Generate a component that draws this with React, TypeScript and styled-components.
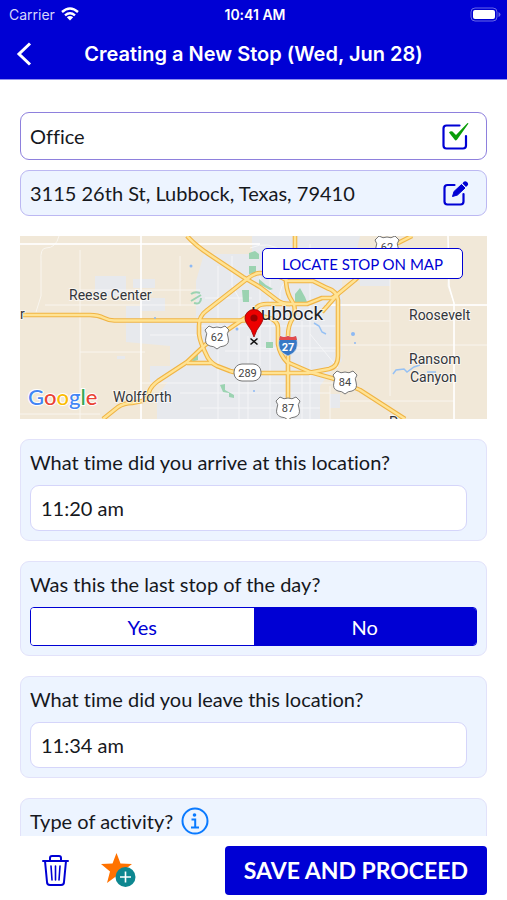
import React, { useState } from "react";
import styled, { createGlobalStyle } from "styled-components";

const blue = "#0000d4";

const GlobalStyle = createGlobalStyle`
  * { box-sizing: border-box; }
  body { margin: 0; background: #fff; }
  body, button, input { font-family: Lato, "Open Sans", sans-serif; font-variant-ligatures: none; }
`;

const Page = styled.div`
  display: flex;
  flex-direction: column;
  height: 100vh;
  color: #16181d;
`;

const Header = styled.header`
  flex: none;
  background: ${blue};
  border-bottom: 1px solid #8f8fee;
  color: #fff;
  font-family: Inter, sans-serif;
`;

const StatusBar = styled.div`
  display: grid;
  grid-template-columns: 1fr auto 1fr;
  align-items: center;
  height: 28px;
  padding: 0 6px 0 9px;
  font-size: 14px;
`;

const Carrier = styled.span`
  display: flex;
  align-items: center;
  gap: 6px;
  color: #d6d6fa;
`;

const Clock = styled.span`
  font-weight: 600;
`;

const Battery = styled.svg`
  justify-self: end;
`;

const TitleBar = styled.div`
  display: grid;
  grid-template-columns: 48px 1fr 48px;
  align-items: center;
  height: 51px;
`;

const Title = styled.h1`
  margin: 0;
  text-align: center;
  font-size: 20px;
  line-height: 28px;
  font-weight: 600;
  white-space: nowrap;
`;

const IconButton = styled.button`
  display: flex;
  align-items: center;
  justify-content: center;
  flex: none;
  padding: 0;
  border: 0;
  background: none;
  color: inherit;
  cursor: pointer;
`;

const Content = styled.main`
  flex: 1;
  min-height: 0;
  overflow-y: auto;
  scrollbar-width: none;
  display: flex;
  flex-direction: column;
  gap: 20px;
  padding: 32px 20px 0;
`;

const PlaceFields = styled.div`
  display: flex;
  flex-direction: column;
  gap: 10px;
`;

const PlaceField = styled.div<{ $tinted?: boolean }>`
  display: flex;
  align-items: center;
  height: ${(p) => (p.$tinted ? 46 : 48)}px;
  padding: 0 17px 0 9px;
  border: 1px solid ${(p) => (p.$tinted ? "#bcb8f2" : "#8e80dd")};
  border-radius: 9px;
  background: ${(p) => (p.$tinted ? "#edf4ff" : "#fff")};
`;

const PlaceInput = styled.input`
  flex: 1;
  min-width: 0;
  padding: 0;
  border: 0;
  background: none;
  color: inherit;
  font-size: 20px;
  line-height: 26px;
  outline: none;
`;

const MapPanel = styled.section`
  position: relative;
  flex: none;
`;

const MapDrawing = styled.svg`
  display: block;
  width: 100%;
  height: auto;
`;

const LocateButton = styled.button`
  position: absolute;
  top: 12px;
  right: 24px;
  height: 31px;
  padding: 0 19px;
  border: 1px solid ${blue};
  border-radius: 5px;
  background: #fff;
  color: ${blue};
  font-size: 15px;
  line-height: 20px;
  cursor: pointer;
`;

const Card = styled.section`
  flex: none;
  display: flex;
  flex-direction: column;
  gap: 10px;
  padding: 9px;
  border: 1px solid #e2e2fa;
  border-radius: 9px;
  background: #edf4ff;
`;

const Question = styled.label`
  font-size: 20px;
  line-height: 26px;
`;

const TimeInput = styled.input`
  height: 46px;
  margin-right: 10px;
  padding: 0 10px;
  border: 1px solid #d5d5fa;
  border-radius: 9px;
  background: #fff;
  color: inherit;
  font-size: 20px;
`;

const ChoiceGroup = styled.div`
  display: flex;
  height: 39px;
  border: 1px solid ${blue};
  border-radius: 4px;
  overflow: hidden;
`;

const Choice = styled.label<{ $selected: boolean }>`
  flex: 1;
  display: flex;
  align-items: center;
  justify-content: center;
  background: ${(p) => (p.$selected ? blue : "#fff")};
  color: ${(p) => (p.$selected ? "#fff" : blue)};
  font-size: 20px;
  cursor: pointer;
`;

const ChoiceRadio = styled.input`
  appearance: none;
  width: 0;
  height: 0;
  margin: 0;
`;

const ActivityRow = styled.div`
  display: flex;
  align-items: center;
  gap: 8px;
  height: 26px;
  margin-bottom: 56px;
`;

const Footer = styled.footer`
  flex: none;
  display: flex;
  align-items: center;
  height: 64px;
  padding: 4px 20px 0 40px;
  gap: 30px;
  background: #fff;
`;

const SaveButton = styled.button`
  height: 49px;
  margin-left: auto;
  padding: 0 19px;
  border: 0;
  border-radius: 4px;
  background: ${blue};
  color: #fff;
  font-size: 23px;
  font-weight: 700;
  white-space: nowrap;
  cursor: pointer;
`;

const roads = [
  "M3 79H70Q78 79 84 82T96 84.500H232",
  "M167 0Q176 10 190 19L223 41L240 51L257 64Q262 68 270 68",
  "M240 37Q234 37 227 43L186 75Q179 80 179 90V98Q180 106 186 118Q189 126 197 130L210 135Q216 137 230 137H288L309 133Q318 131 318 120V64Q317 55 307 52L293 45H268Q254 37 240 37",
  "M83 183L98 171Q104 167 112 167L122 165Q128 163 129 156Q131 150 138 145L167 126L185 109L197 101L228 80L237 71Q240 68 247 68H287L302 62H312L318 58L335 44L366 14Q373 8 380 6L392 0",
  "M167 127H192",
  "M275 0V32Q266 36 266 46Q267 58 272 65Q277 72 273 82Q268 89 268 100V183",
  "M240 80Q258 82 258 92V108Q260 119 267 126L290 136L315 143L340 154L385 183",
  "M302 76L318 58",
];

const minorRoads = [
  "M0 8H240", "M121 0V183", "M60 14V183", "M39 0Q36 12 26 12Q20 12 21 25V60L16 76",
  "M60 54H180", "M60 116H125", "M25 69H180", "M0 178H80", "M130 99H180",
  "M198 30V183", "M212 20V50L219 62V183", "M160 20V70", "M228 100V183",
  "M120 147H320", "M205 115H315", "M160 157H310", "M180 172H300", "M240 90H315",
  "M290 8V183", "M310 150V183", "M240 40V130", "M250 40V183", "M282 85V183",
  "M305 69H467", "M428 0L429 20L428 50L434 67V183", "M330 85H370", "M318 109H467",
  "M370 35V160", "M320 165H434", "M230 12Q250 4 262 16", "M290 98L318 132",
  "M260 64Q258 48 272 40", "M230 112H318", "M185 62H232", "M180 90H258",
];

function UsShield({ x, y, label }: { x: number; y: number; label: string }) {
  return (
    <g transform={`translate(${x} ${y})`}>
      <path
        d="M-8 -11Q-4 -8 0 -10Q4 -8 8 -11L12 -7Q9 -3 11 0Q13 7 7 9Q3 9 0 12Q-3 9 -7 9Q-13 7 -11 0Q-9 -3 -12 -7Z"
        fill="#fff" stroke="#777" strokeWidth="1" strokeLinejoin="round"
      />
      <text y="4" textAnchor="middle" fontSize="11" fill="#444">{label}</text>
    </g>
  );
}

function StopMap() {
  return (
    <MapDrawing viewBox="0 0 467 183" role="img" aria-label="Map of Lubbock" fontFamily="Roboto, sans-serif">
      <rect width="467" height="183" fill="#f1e8d8" />
      <path
        d="M184 18H232V0H340L335 22L322 42V125L308 139L300 150V183H137V160L150 143V110L106 106V70H120V84H176V45Z"
        fill="#e7e9ed"
      />
      <path d="M75 40H106V60H75ZM113 43H135V52H113ZM120 62H145V75H120ZM130 130H152V146H130ZM97 120H105V123H97ZM340 34H370V50H340ZM310 158H320V172H310Z" fill="#e7e9ed" />
      <g fill="none" stroke="#fff" strokeWidth="1" opacity="0.6">
        {minorRoads.map((d) => <path key={d} d={d} />)}
      </g>
      <path d="M0 8H240M121 0V183M305 69H467M428 0L429 50L434 67V183" fill="none" stroke="#fff" strokeWidth="1.5" />
      <g fill="#9bd3b1">
        <path d="M229 17L235 15L239 18V23H229ZM229 30H236V37L229 38ZM222 54H229V66H223ZM275 58L280 52L285 61L287 66L275 68ZM171 126L178 117V124ZM246 106H253V112H246ZM200 149L205 148V154L214 159V162L209 161V157L203 156ZM239 43L246 49L253 53L250 54L239 48Z" />
        <path d="M171 58Q175 55 180 57M171 65Q176 62 181 59M174 67Q181 69 181 62" fill="none" stroke="#9bd3b1" strokeWidth="2" />
      </g>
      <g fill="none" stroke="#f0b445" strokeWidth="4.600" strokeLinejoin="round">
        {roads.map((d) => <path key={d} d={d} />)}
      </g>
      <g fill="none" stroke="#ffe394" strokeWidth="2.400" strokeLinejoin="round">
        {roads.map((d) => <path key={d} d={d} />)}
      </g>
      <path d="M373 138L376 134L384 133L387 136L394 131L400 129M294 87L299 90L302 96L306 98M407 136H416" fill="none" stroke="#96c1f4" strokeWidth="1.500" />
      <g fill="#8db9f4">
        <circle cx="333" cy="98" r="2" /><circle cx="171" cy="30" r="1.500" />
        <circle cx="217" cy="93" r="1.500" /><circle cx="135" cy="82" r="1" />
        <circle cx="335" cy="107" r="1" /><circle cx="234" cy="155" r="1" />
      </g>

      <UsShield x={197} y={101} label="62" />
      <UsShield x={367} y={11} label="62" />
      <UsShield x={325} y={146} label="84" />
      <UsShield x={268} y={172} label="87" />
      <rect x="214" y="128" width="27" height="17" rx="8" fill="#fff" stroke="#777" strokeWidth="1" />
      <text x="227.500" y="141" textAnchor="middle" fontSize="11" fill="#444">289</text>
      <path d="M260 100Q264 102 268 100Q272 102 276 100Q281 115 268 120Q255 115 260 100Z" fill="#3678c5" stroke="#fff" strokeWidth="0.500" />
      <path d="M260 100Q264 102 268 100Q272 102 276 100L277 104H259Z" fill="#e34b4c" />
      <text x="268" y="115" textAnchor="middle" fontSize="11" fontWeight="700" fill="#fff">27</text>

      <g fill="#33363b" stroke="#fff" strokeWidth="2" strokeOpacity="0.6" paintOrder="stroke" fontSize="14">
        <text x="49" y="64">Reese Center</text>
        <text x="0" y="83">r</text>
        <text x="93" y="166">Wolfforth</text>
        <text x="389" y="84">Roosevelt</text>
        <text x="389" y="128">Ransom</text>
        <text x="390" y="146">Canyon</text>
        <text x="369" y="191">P</text>
        <text x="231" y="84" fontSize="19" fill="#202226">Lubbock</text>
      </g>
      <path d="M230.500 102.500L237.500 108.500M237.500 102.500L230.500 108.500" stroke="#111" strokeWidth="1.500" />
      <path d="M234 101Q232 94 227 88Q225 85 225 82A9 8.500 0 0 1 243 82Q243 85 241 88Q236 94 234 101Z" fill="#ed0000" stroke="#970000" strokeWidth="0.800" />
      <circle cx="234" cy="82" r="3.600" fill="#900" />
      <text x="8" y="169" fontFamily="Lato, sans-serif" fontWeight="500" fontSize="22" stroke="#fff" strokeWidth="2" paintOrder="stroke">
        <tspan fill="#4285f4">G</tspan><tspan fill="#ea4335">o</tspan><tspan fill="#fbbc05">o</tspan>
        <tspan fill="#4285f4">g</tspan><tspan fill="#34a853">l</tspan><tspan fill="#ea4335">e</tspan>
      </text>
    </MapDrawing>
  );
}

function WifiIcon() {
  return (
    <svg width="18" height="14" viewBox="0 0 18 14" fill="none" stroke="#fff" strokeWidth="2.400" aria-hidden="true">
      <path d="M1 5Q9 -2 17 5M4 8.300Q9 4 14 8.300" />
      <path d="M9 13.500L5.800 10.300Q9 7.800 12.200 10.300Z" fill="#fff" stroke="none" />
    </svg>
  );
}

function BatteryIcon() {
  return (
    <Battery width="31" height="15" viewBox="0 0 31 15" aria-hidden="true">
      <rect x="1" y="1" width="26" height="13" rx="4" fill="none" stroke="#6666e6" />
      <rect x="3" y="3" width="22" height="9" rx="2" fill="#fff" />
      <path d="M28.500 5V10Q30.500 9 30.500 7.500T28.500 5Z" fill="#6666e6" />
    </Battery>
  );
}

function BackIcon() {
  return (
    <svg width="16" height="24" viewBox="0 0 16 24" fill="none" stroke="#fff" strokeWidth="3" aria-hidden="true">
      <path d="M14 1.500L3 12L14 22.500" />
    </svg>
  );
}

function CheckBoxIcon() {
  return (
    <svg width="28" height="28" viewBox="0 0 28 28" fill="none" aria-hidden="true">
      <path d="M18.500 3.500H5.500Q2.500 3.500 2.500 6.500V23.500Q2.500 26.500 5.500 26.500H22Q25 26.500 25 23.500V14" stroke={blue} strokeWidth="2.200" strokeLinecap="round" />
      <path d="M8 10.500Q9.500 8.500 11.500 9.500L15 13L26.500 1L27.500 1.500L16.500 17Q15 19.500 13.500 17.500Z" fill="#0a9d0a" />
    </svg>
  );
}

function EditIcon() {
  return (
    <svg width="28" height="28" viewBox="0 0 28 28" fill="none" aria-hidden="true">
      <path d="M13.500 6H6.500Q3.500 6 3.500 9V22.500Q3.500 25.500 6.500 25.500H19.500Q22.500 25.500 22.500 22.500V15" stroke={blue} strokeWidth="2.200" strokeLinecap="round" />
      <path d="M11.500 17.500L13 12.500L20.500 5.500L24 9L16.500 16Z" fill={blue} stroke={blue} strokeLinejoin="round" />
      <path d="M21.500 4.500L22.500 3Q24 1.500 26 3Q28 5 26.500 6.500L25 8Z" fill={blue} />
    </svg>
  );
}

function InfoIcon() {
  return (
    <svg width="28" height="28" viewBox="0 0 28 28" fill="none" stroke="#0a7aff" aria-hidden="true">
      <circle cx="14" cy="14" r="12.500" strokeWidth="2" />
      <circle cx="13.500" cy="8" r="1.800" fill="#0a7aff" stroke="none" />
      <path d="M10.500 12.500H14.200V20.500M10 20.500H18" strokeWidth="2" />
    </svg>
  );
}

function TrashIcon() {
  return (
    <svg width="30" height="32" viewBox="0 0 30 32" fill="none" stroke={blue} strokeWidth="2" strokeLinecap="round" strokeLinejoin="round" aria-hidden="true">
      <path d="M3 7H28M10 7V4Q10 2 12 2H19Q21 2 21 4V7M5 7L7 28Q7 31 10 31H21Q24 31 24 28L26 7" />
      <path d="M11 12L12 26M15.500 12V26M20 12L19 26" strokeWidth="1.600" />
    </svg>
  );
}

function AddFavoriteIcon() {
  return (
    <svg width="36" height="36" viewBox="0 0 36 36" aria-hidden="true">
      <path d="M16.500 1L20.500 11.500L32 12L23 19L26 30L16.500 24L7 31L10 19.500L1 12L12.500 11.500Z" fill="#ff7200" />
      <circle cx="25.500" cy="25" r="10" fill="#0d8790" />
      <path d="M20 25H31M25.500 19.500V30.500" stroke="#fff" strokeWidth="1.600" />
    </svg>
  );
}

export default function App() {
  const [place, setPlace] = useState("Office");
  const [address, setAddress] = useState("3115 26th St, Lubbock, Texas, 79410");
  const [arrival, setArrival] = useState("11:20 am");
  const [departure, setDeparture] = useState("11:34 am");
  const [lastStop, setLastStop] = useState("No");

  return (
    <Page>
      <GlobalStyle />
      <Header>
        <StatusBar>
          <Carrier>Carrier <WifiIcon /></Carrier>
          <Clock>10:41 AM</Clock>
          <BatteryIcon />
        </StatusBar>
        <TitleBar>
          <IconButton aria-label="Back"><BackIcon /></IconButton>
          <Title>Creating a New Stop (Wed, Jun 28)</Title>
        </TitleBar>
      </Header>

      <Content>
        <PlaceFields>
          <PlaceField>
            <PlaceInput aria-label="Stop name" value={place} onChange={(e) => setPlace(e.target.value)} />
            <IconButton aria-label="Confirm stop name"><CheckBoxIcon /></IconButton>
          </PlaceField>
          <PlaceField $tinted>
            <PlaceInput aria-label="Address" value={address} onChange={(e) => setAddress(e.target.value)} />
            <IconButton aria-label="Edit address"><EditIcon /></IconButton>
          </PlaceField>
        </PlaceFields>

        <MapPanel>
          <StopMap />
          <LocateButton>LOCATE STOP ON MAP</LocateButton>
        </MapPanel>

        <Card>
          <Question htmlFor="arrival">What time did you arrive at this location?</Question>
          <TimeInput id="arrival" value={arrival} onChange={(e) => setArrival(e.target.value)} />
        </Card>

        <Card>
          <Question as="span" id="last-stop">Was this the last stop of the day?</Question>
          <ChoiceGroup role="radiogroup" aria-labelledby="last-stop">
            {["Yes", "No"].map((option) => (
              <Choice key={option} $selected={lastStop === option}>
                <ChoiceRadio type="radio" name="last-stop" checked={lastStop === option} onChange={() => setLastStop(option)} />
                {option}
              </Choice>
            ))}
          </ChoiceGroup>
        </Card>

        <Card>
          <Question htmlFor="departure">What time did you leave this location?</Question>
          <TimeInput id="departure" value={departure} onChange={(e) => setDeparture(e.target.value)} />
        </Card>

        <Card>
          <ActivityRow>
            <Question as="span">Type of activity?</Question>
            <IconButton aria-label="About activity types"><InfoIcon /></IconButton>
          </ActivityRow>
        </Card>
      </Content>

      <Footer>
        <IconButton aria-label="Delete stop"><TrashIcon /></IconButton>
        <IconButton aria-label="Add to favorites"><AddFavoriteIcon /></IconButton>
        <SaveButton>SAVE AND PROCEED</SaveButton>
      </Footer>
    </Page>
  );
}
